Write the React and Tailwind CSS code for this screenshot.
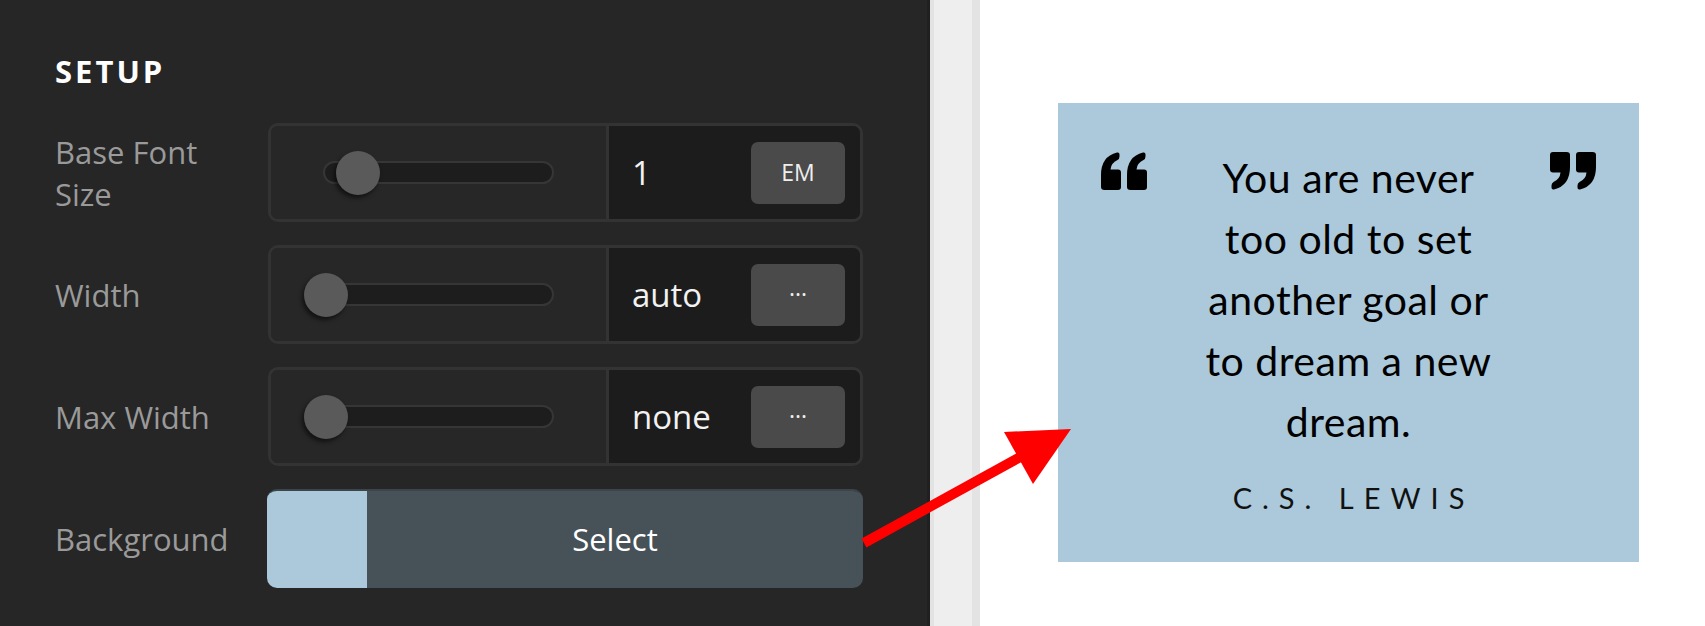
const rows = [
  { label: 'Base Font Size', value: '1', unit: 'EM', thumb: 'left-[11px]' },
  { label: 'Width', value: 'auto', unit: '···', thumb: 'left-[-21px]' },
  { label: 'Max Width', value: 'none', unit: '···', thumb: 'left-[-21px]' },
];

const QuoteMark = ({ close }) => (
  <svg width="46" height="38" viewBox="0 0 46 38" className="shrink-0 mt-[5px]">
    <g transform={close ? 'rotate(180 23 19)' : undefined} fill="#000">
      <path d="M3.5 38H17Q20 38 20 35V20.5Q20 17.5 17 17.5H9.5Q10 11 16.5 8Q18.5 7 18.5 4.5V2.5Q18.5 0 16 0.5Q0 4.5 0 23V35Q0 38 3.5 38Z" />
      <path d="M29.5 38H43Q46 38 46 35V20.5Q46 17.5 43 17.5H35.5Q36 11 42.5 8Q44.5 7 44.5 4.5V2.5Q44.5 0 42 0.5Q26 4.5 26 23V35Q26 38 29.5 38Z" />
    </g>
  </svg>
);

const SliderRow = ({ label, value, unit, thumb }) => (
  <div className="flex items-center">
    <div className="w-[213px] shrink-0">
      <div className="max-w-[195px] text-[31px] leading-[42px] text-[#9a9a9a]">{label}</div>
    </div>
    <div className="flex h-[99px] flex-1 overflow-hidden rounded-[10px] border-[3px] border-[#333333]">
      {/* slider */}
      <div className="flex w-[338px] items-center border-r-[3px] border-[#333333] bg-[#272727] px-[52px]">
        <div className="relative h-[23px] flex-1 rounded-full border-2 border-[#363636] bg-[#1d1d1d]">
          <div
            className={`absolute top-1/2 h-[44px] w-[44px] -translate-y-1/2 rounded-full bg-[#5a5a5a] shadow-[-2px_3px_4px_rgba(0,0,0,0.55)] ${thumb}`}
          />
        </div>
      </div>
      {/* value + unit */}
      <div className="flex flex-1 items-center justify-between bg-[#1c1c1c] pl-[23px] pr-[15px]">
        <span className="text-[33px] text-[#f2f2f2]">{value}</span>
        <button className="flex h-[62px] w-[94px] items-center justify-center rounded-[7px] bg-[#4a4a4a] text-[23px] text-[#eeeeee]">
          {unit}
        </button>
      </div>
    </div>
  </div>
);

const App = () => {
  return (
    <div className="relative flex h-[626px] w-[1705px] overflow-hidden bg-white">
      {/* Settings panel */}
      <div
        className="w-[930px] shrink-0 border-r-[3px] border-[#202020] bg-[#262626] pl-[55px] pr-[64px] pt-[50px]"
        style={{ fontFamily: '"Open Sans", sans-serif' }}
      >
        <h2 className="text-[31px] font-bold leading-[42px] tracking-[3px] text-white">SETUP</h2>
        <div className="mt-[31px] flex flex-col gap-[23px]">
          {rows.map((row) => (
            <SliderRow key={row.label} {...row} />
          ))}

          <div className="flex items-center">
            <div className="w-[212px] shrink-0 text-[31px] leading-[42px] text-[#9a9a9a]">Background</div>
            <div className="flex h-[99px] flex-1 overflow-hidden rounded-[10px] border-t-2 border-[#3b454a]">
              <div className="w-[100px] bg-[#abc9da]" />
              <button className="flex flex-1 items-center justify-center bg-[#475258] text-[31px] text-white">
                Select
              </button>
            </div>
          </div>
        </div>
      </div>

      {/* Gutter */}
      <div className="w-[50px] shrink-0 border-l-[4px] border-r-[8px] border-[#e3e3e3] bg-[#eeeeee]" />

      {/* Preview */}
      <div className="flex-1 pl-[78px] pt-[103px]" style={{ fontFamily: 'Lato, sans-serif' }}>
        <div className="flex h-[459px] w-[581px] bg-[#abc9da] px-[43px] pt-[44px]">
          <QuoteMark />
          <div className="flex-1 px-[50px] text-center text-black">
            <p className="text-[41px] leading-[61px] tracking-[0.5px]">
              You are never too old to set another goal or to dream a new dream.
            </p>
            <p className="mt-[28px] pl-[10px] text-[29px] leading-[35px] tracking-[10px] text-[#111]">
              C.S. LEWIS
            </p>
          </div>
          <QuoteMark close />
        </div>
      </div>

      {/* Red arrow annotation */}
      <svg className="pointer-events-none absolute left-0 top-0" width="1705" height="626">
        <line x1="864" y1="543" x2="1022" y2="456" stroke="#ff0000" strokeWidth="10" />
        <polygon points="1071,429 1004,432 1033,484" fill="#ff0000" />
      </svg>
    </div>
  );
};

export default App;
